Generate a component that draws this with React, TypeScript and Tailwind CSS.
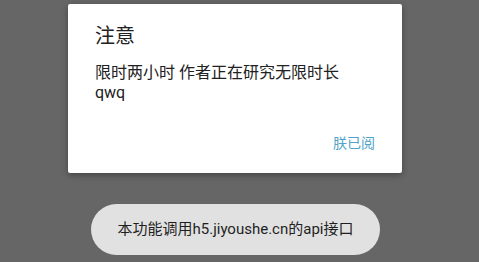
import React from 'react';

const font = { fontFamily: "Roboto, 'Noto Sans CJK SC', sans-serif" };

export default function App() {
  return (
    <div
      className="w-[479px] h-[262px] bg-[#666666] overflow-hidden flex flex-col pl-[68px] pt-[4px]"
      style={font}
    >
      {/* Dialog */}
      <div className="w-[334px] h-[169px] bg-white rounded-[2px] shadow-[0_2px_6px_rgba(0,0,0,0.35)] flex flex-col px-[27px] pt-[18px]">
        <h2 className="text-[20px] leading-[28px] text-[#212121]">注意</h2>
        <p className="mt-[13px] text-[16px] leading-[20px] text-[#212121]">
          限时两小时 作者正在研究无限时长
          <br />
          qwq
        </p>
        <div className="flex justify-end mt-[30px]">
          <button className="text-[14px] leading-[20px] text-[#4fa3c8]">朕已阅</button>
        </div>
      </div>

      {/* Toast */}
      <div className="mt-[31px] ml-[23px] w-[289px] h-[51px] rounded-full bg-[#e1e1e1] flex items-center justify-center">
        <span className="text-[15px] text-[#1f1f1f]">本功能调用h5.jiyoushe.cn的api接口</span>
      </div>
    </div>
  );
}
